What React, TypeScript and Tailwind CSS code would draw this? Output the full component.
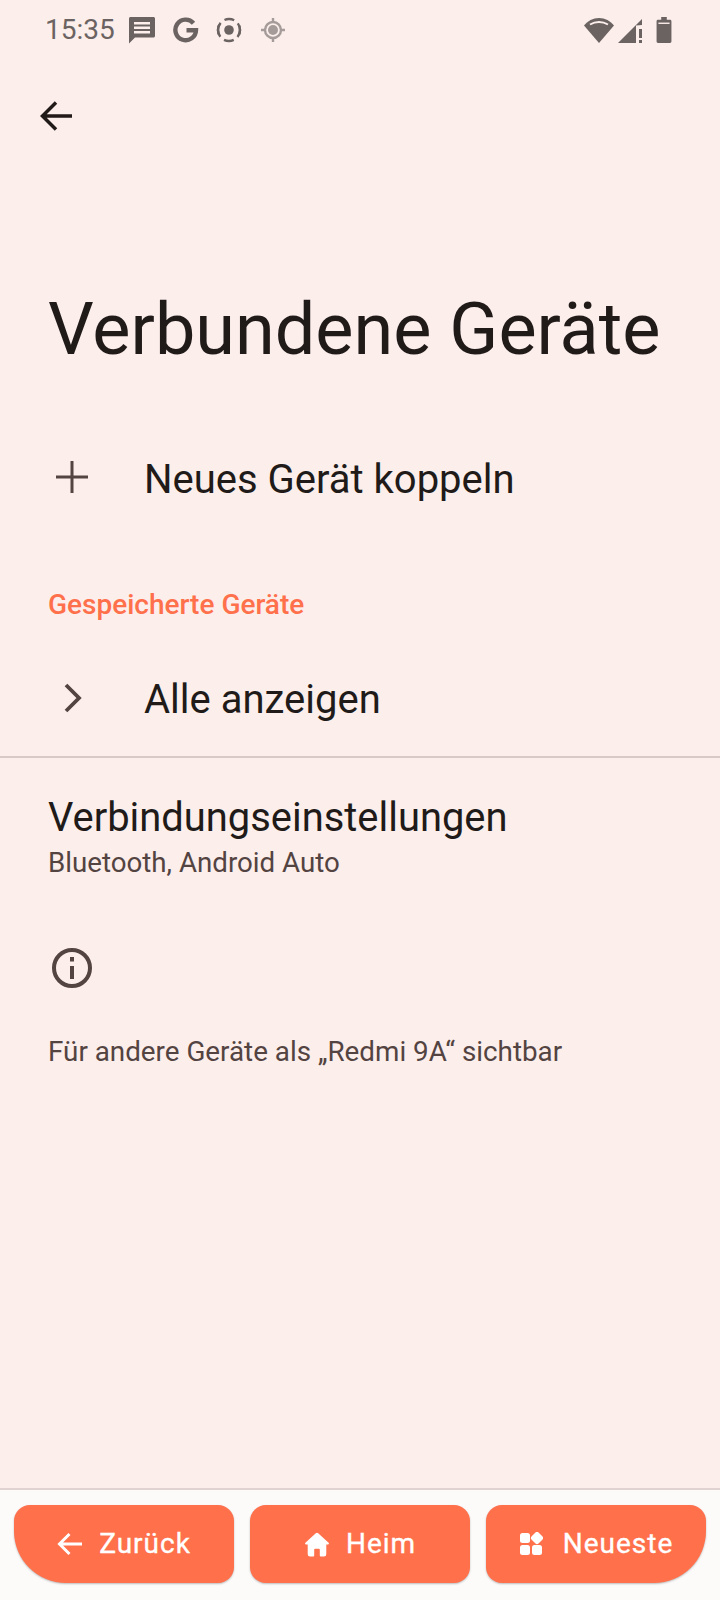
import React from 'react';

const StatusIcons = () => (
  <div className="flex items-center">
    {/* message */}
    <svg width="28" height="28" viewBox="0 0 28 28" className="ml-[13px]">
      <path fill="#6b6361" d="M1 2.500C1 1.700 1.700 1 2.500 1h23c.8 0 1.500.7 1.500 1.500V20c0 .8-.7 1.500-1.500 1.500H7L1 27.500z" />
      <path fill="#fcefec" d="M6 6h16v2.400H6zM6 10.500h16v2.400H6zM6 15h16v2.400H6z" />
    </svg>
    {/* G */}
    <svg width="26" height="26" viewBox="0 0 26 26" className="ml-[17px]">
      <path fill="none" stroke="#6b6361" strokeWidth="4.400" d="M20.500 6.200A10.300 10.300 0 1 0 23 13.200H13.500" />
    </svg>
    {/* screen record */}
    <svg width="26" height="26" viewBox="0 0 26 26" className="ml-[17px]">
      <circle cx="13" cy="13" r="4.800" fill="#6b6361" />
      <circle cx="13" cy="13" r="11" fill="none" stroke="#6b6361" strokeWidth="2.400" strokeDasharray="15 19.560" strokeDashoffset="7.500" />
      <circle cx="13" cy="13" r="11" fill="none" stroke="#6b6361" strokeWidth="2.400" strokeDasharray="10 24.560" strokeDashoffset="-12.300" />
      <circle cx="13" cy="13" r="11" fill="none" stroke="#6b6361" strokeWidth="2.400" strokeDasharray="10 24.560" strokeDashoffset="-29.600" />
    </svg>
    {/* location */}
    <svg width="24" height="24" viewBox="0 0 24 24" className="ml-[19px]">
      <g fill="none" stroke="#a59c9a">
        <circle cx="12" cy="12" r="8" strokeWidth="2.400" />
        <path strokeWidth="2.400" d="M12 0v4.500M12 19.500V24M0 12h4.500M19.500 12H24" />
      </g>
      <circle cx="12" cy="12" r="5" fill="#a59c9a" />
    </svg>
  </div>
);

const ZurueckArrow = () => (
  <svg width="26" height="24" viewBox="0 0 26 24" fill="none" stroke="#fff" strokeWidth="3">
    <path d="M25 12H3M12.500 2 2.500 12l10 10" />
  </svg>
);

const HomeIcon = () => (
  <svg width="26" height="26" viewBox="0 0 28 28" fill="#fff">
    <path d="M14 2a2 2 0 0 1 1.300.5L26.500 12.700c.7.6.3 1.800-.6 1.800H24V25a2.500 2.500 0 0 1-2.500 2.500h-3.500a1 1 0 0 1-1-1V20a1 1 0 0 0-1-1h-4a1 1 0 0 0-1 1v6.500a1 1 0 0 1-1 1H6.500A2.500 2.500 0 0 1 4 25V14.500H2.100c-.9 0-1.300-1.200-.6-1.800L12.700 2.500A2 2 0 0 1 14 2z" />
  </svg>
);

const RecentsIcon = () => (
  <svg width="24" height="24" viewBox="0 0 24 24" fill="#fff">
    <rect x="1" y="1" width="10" height="10" rx="2.500" />
    <rect x="1" y="13" width="10" height="10" rx="2.500" />
    <rect x="13" y="13" width="10" height="10" rx="2.500" />
    <rect x="13" y="1" width="10" height="10" rx="2.500" transform="rotate(45 18 6)" />
  </svg>
);

const NavButton = ({ icon, label, className }: { icon: React.ReactNode; label: string; className: string }) => (
  <button className={`flex-1 h-[78px] bg-[#ff704b] text-white flex items-center justify-center text-[28px] tracking-[1px] [-webkit-text-stroke:0.35px_white] shadow-[0_1px_2px_rgba(0,0,0,0.25)] ${className}`}>
    {icon}
    <span>{label}</span>
  </button>
);

export default function App() {
  return (
    <div className="w-[720px] h-[1600px] flex flex-col bg-[#fceeeb] font-['Roboto',sans-serif] text-[#201a19] overflow-hidden">
      {/* status bar */}
      <div className="h-[60px] pl-[45px] pr-[48px] flex items-center justify-between">
        <div className="flex items-center">
          <span className="text-[28px] leading-none text-[#6b6361]">15:35</span>
          <StatusIcons />
        </div>
        <div className="flex items-center">
          <svg width="30" height="26" viewBox="0 0 30 26">
            <path fill="#6b6361" d="M0 8.500C3.500 4 9 1 15 1s11.500 3 15 7.500L15 26z" />
            <path fill="none" stroke="#fceeeb" strokeWidth="2" d="M6 7.500C8.500 6 11.500 5 15 5s6.500 1 9 2.500" />
          </svg>
          <svg width="26" height="26" viewBox="0 0 26 26" className="ml-[4px]">
            <path fill="#6b6361" d="M0 26 24 2v6L18 8.500V26z" />
            <path fill="#6b6361" d="M21 12h3v9h-3zM21 23h3v3h-3z" />
          </svg>
          <svg width="16" height="26" viewBox="0 0 16 28" className="ml-[12px]">
            <path fill="#6b6361" d="M5 0h6v3h3.500c.8 0 1.500.7 1.500 1.500v22c0 .8-.7 1.500-1.500 1.500h-13C.7 28 0 27.300 0 26.500v-22C0 3.700.7 3 1.500 3H5z" />
            <path fill="#fceeeb" d="M2 6h12v1.500H2z" />
          </svg>
        </div>
      </div>

      {/* top app bar */}
      <div className="mt-[28px] h-[56px] pl-[39px] flex items-center">
        <svg width="34" height="34" viewBox="0 0 34 34" fill="none" stroke="#201a19" strokeWidth="3.500">
          <path d="M33 17H4M17 3.500 3.500 17 17 30.500" />
        </svg>
      </div>

      <h1 className="mt-[144px] pl-[48px] text-[72px] leading-[84px]">Verbundene Geräte</h1>

      {/* pair new device */}
      <div className="mt-[75px] h-[60px] flex items-center pl-[55px]">
        <svg width="34" height="34" viewBox="0 0 34 34" fill="none" stroke="#534341" strokeWidth="3">
          <path d="M17 1v32M1 17h32" />
        </svg>
        <span className="ml-[55px] mt-[5px] text-[40px]">Neues Gerät koppeln</span>
      </div>

      <div className="mt-[81px] pl-[48px] text-[28px] leading-[34px] font-medium text-[#ff704b]">Gespeicherte Geräte</div>

      {/* show all */}
      <div className="mt-[47px] h-[60px] flex items-center pl-[60px]">
        <svg width="24" height="30" viewBox="0 0 24 30" fill="none" stroke="#534341" strokeWidth="3.800" className="mb-[3px]">
          <path d="M6 2l13 13L6 28" />
        </svg>
        <span className="ml-[60px] mt-[2px] text-[40px]">Alle anzeigen</span>
      </div>

      <div className="mt-[27px] h-[2px] bg-[#d8c9c7]" />

      <div className="mt-[36px] pl-[48px] text-[39.9px] leading-[48px]">Verbindungseinstellungen</div>
      <div className="mt-[5px] pl-[48px] text-[27.7px] leading-[32px] text-[#534341]">Bluetooth, Android Auto</div>

      {/* info */}
      <div className="mt-[68px] pl-[51px]">
        <svg width="42" height="42" viewBox="0 0 42 42" fill="none" stroke="#534341" strokeWidth="4">
          <circle cx="21" cy="21" r="18" />
          <path d="M21 19v13M21 10v4.500" />
        </svg>
      </div>

      <div className="mt-[45px] pl-[48px] text-[27.8px] leading-[36px] text-[#534341]">Für andere Geräte als „Redmi 9A“ sichtbar</div>

      <div className="flex-1" />

      {/* nav bar */}
      <div className="h-[112px] border-t-2 border-[#e0d3d1] bg-[#fdfafa] px-[14px] pt-[15px] flex gap-[16px]">
        <NavButton icon={<span className="mr-[16px]"><ZurueckArrow /></span>} label="Zurück" className="rounded-tl-[16px] rounded-tr-[16px] rounded-br-[16px] rounded-bl-[52px]" />
        <NavButton icon={<span className="mr-[16px]"><HomeIcon /></span>} label="Heim" className="rounded-[16px]" />
        <NavButton icon={<span className="mr-[20px]"><RecentsIcon /></span>} label="Neueste" className="rounded-tl-[16px] rounded-tr-[16px] rounded-bl-[16px] rounded-br-[52px]" />
      </div>
    </div>
  );
}
